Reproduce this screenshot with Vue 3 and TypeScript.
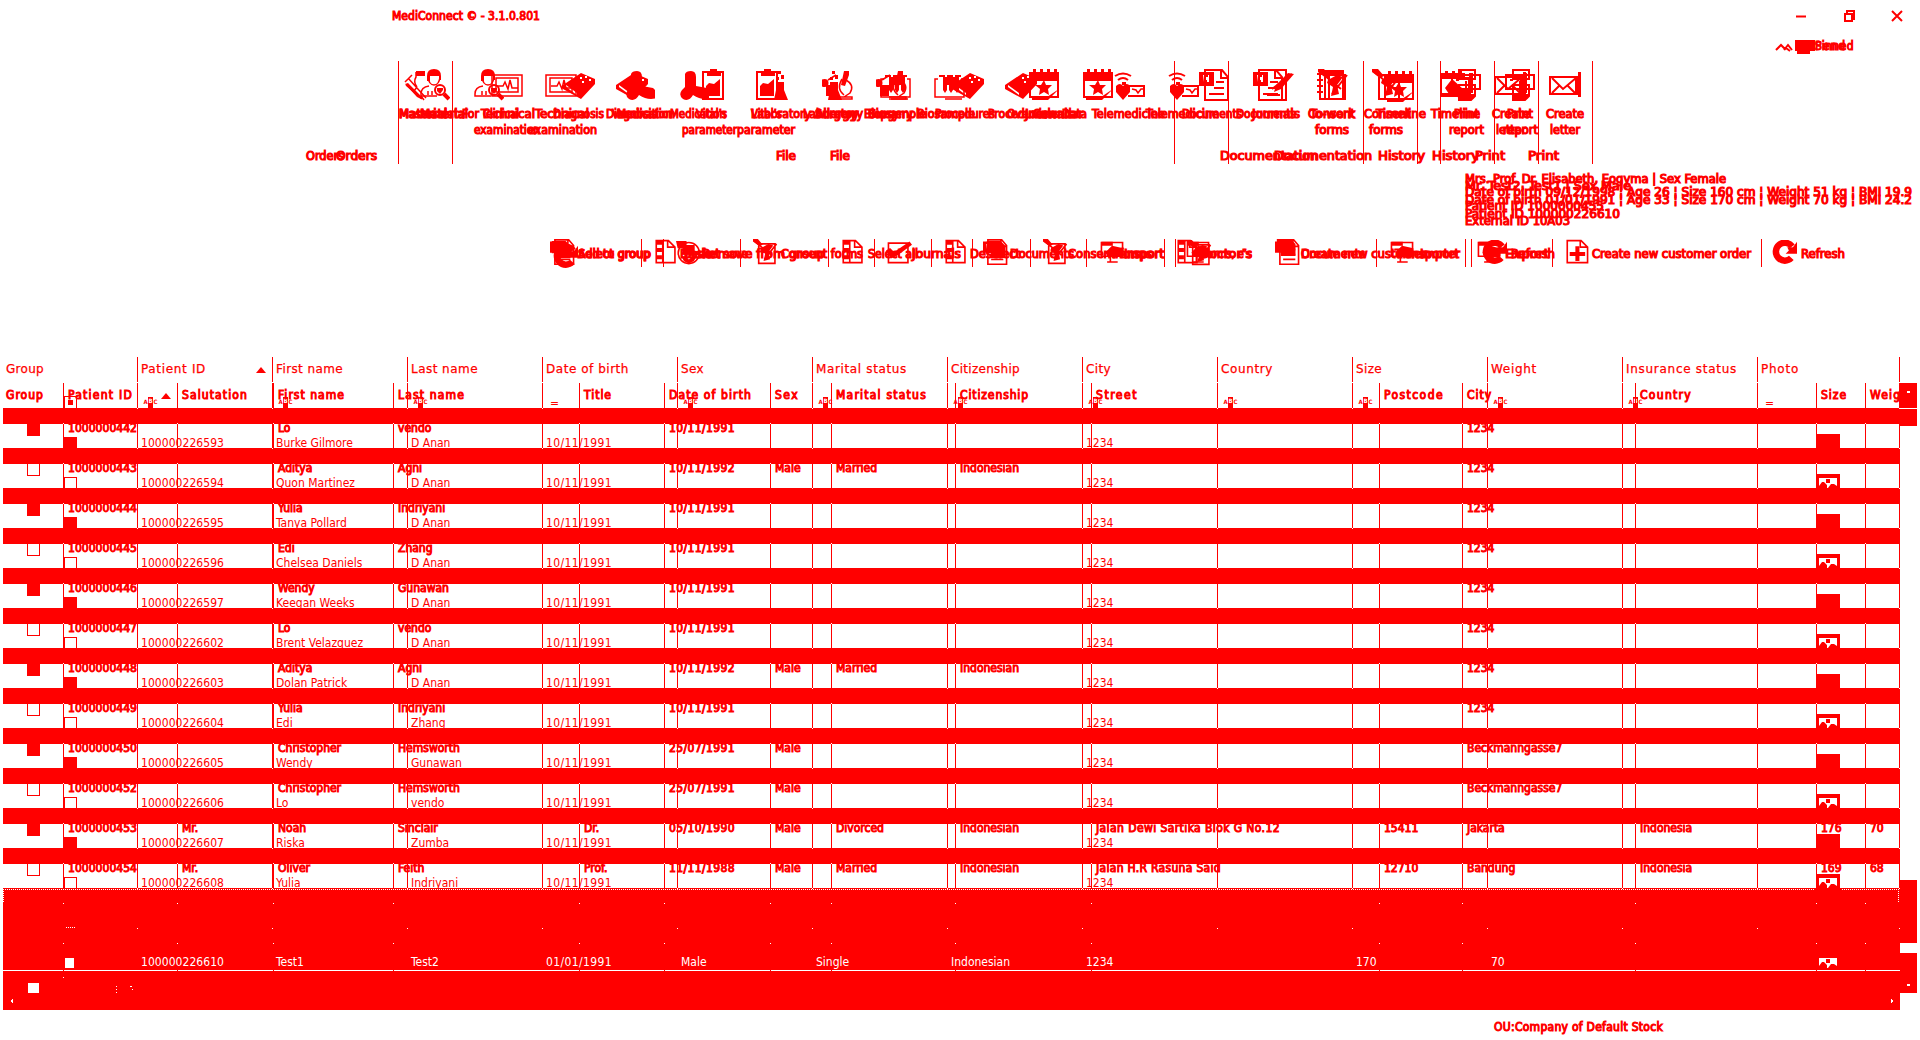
<script setup lang="ts">
type Label = [text: string, x: number, y: number, width: number]
type Glyph = [id: string, x: number, y: number]

interface Row {
  id: string
  cells: Record<number, string>
  first: string
  last: string
  under: string
}

const fit = (el: HTMLElement, binding: { value: number }) => {
  if (!binding.value || !el.textContent) return
  const natural = el.getBoundingClientRect().width
  el.style.letterSpacing = (binding.value - natural) / el.textContent.length + 'px'
}
const vFit = { mounted: fit }

const wideLines = [137, 272, 407, 542, 677, 812, 947, 1082, 1217, 1352, 1487, 1622, 1757, 1899]
const denseLines = [63, 177, 273, 393, 579, 664, 770, 831, 955, 1091, 1379, 1462, 1635, 1816, 1865]

const wideHeads: [string, number][] = [
  ['Group', 38], ['Patient ID', 65], ['First name', 67], ['Last name', 67], ['Date of birth', 83], ['Sex', 23],
  ['Marital status', 91], ['Citizenship', 69], ['City', 25], ['Country', 52], ['Size', 26], ['Weight', 46],
  ['Insurance status', 111], ['Photo', 38],
]
const denseHeads: [string, number][] = [
  ['Group', 38], ['Patient ID', 65], ['Salutation', 66], ['First name', 67], ['Last name', 67], ['Title', 28],
  ['Date of birth', 83], ['Sex', 24], ['Marital status', 91], ['Citizenship', 69], ['Street', 42], ['Postcode', 60],
  ['City', 25], ['Country', 52], ['Size', 26], ['Weight', 45],
]

const rows: Row[] = [
  { id: '1000000442', cells: { 3: 'Lo', 4: 'vendo', 6: '10/11/1991', 12: '1234' }, under: '100000226593', first: 'Burke Gilmore', last: 'D Anan' },
  { id: '1000000443', cells: { 3: 'Aditya', 4: 'Agni', 6: '10/11/1992', 7: 'Male', 8: 'Married', 9: 'Indonesian', 12: '1234' }, under: '100000226594', first: 'Quon Martinez', last: 'D Anan' },
  { id: '1000000444', cells: { 3: 'Yulia', 4: 'Indriyani', 6: '10/11/1991', 12: '1234' }, under: '100000226595', first: 'Tanya Pollard', last: 'D Anan' },
  { id: '1000000445', cells: { 3: 'Edi', 4: 'Zhang', 6: '10/11/1991', 12: '1234' }, under: '100000226596', first: 'Chelsea Daniels', last: 'D Anan' },
  { id: '1000000446', cells: { 3: 'Wendy', 4: 'Gunawan', 6: '10/11/1991', 12: '1234' }, under: '100000226597', first: 'Keegan Weeks', last: 'D Anan' },
  { id: '1000000447', cells: { 3: 'Lo', 4: 'vendo', 6: '10/11/1991', 12: '1234' }, under: '100000226602', first: 'Brent Velazquez', last: 'D Anan' },
  { id: '1000000448', cells: { 3: 'Aditya', 4: 'Agni', 6: '10/11/1992', 7: 'Male', 8: 'Married', 9: 'Indonesian', 12: '1234' }, under: '100000226603', first: 'Dolan Patrick', last: 'D Anan' },
  { id: '1000000449', cells: { 3: 'Yulia', 4: 'Indriyani', 6: '10/11/1991', 12: '1234' }, under: '100000226604', first: 'Edi', last: 'Zhang' },
  { id: '1000000450', cells: { 3: 'Christopher', 4: 'Hemsworth', 6: '25/07/1991', 7: 'Male', 12: 'Beckmanngasse7' }, under: '100000226605', first: 'Wendy', last: 'Gunawan' },
  { id: '1000000452', cells: { 3: 'Christopher', 4: 'Hemsworth', 6: '25/07/1991', 7: 'Male', 12: 'Beckmanngasse7' }, under: '100000226606', first: 'Lo', last: 'vendo' },
  { id: '1000000453', cells: { 2: 'Mr.', 3: 'Noah', 4: 'Sinclair', 5: 'Dr.', 6: '05/10/1990', 7: 'Male', 8: 'Divorced', 9: 'Indonesian', 10: 'Jalan Dewi Sartika Blok G No.12', 11: '15411', 12: 'Jakarta', 13: 'Indonesia', 14: '176', 15: '70' }, under: '100000226607', first: 'Riska', last: 'Zumba' },
  { id: '1000000454', cells: { 2: 'Mr.', 3: 'Oliver', 4: 'Feith', 5: 'Prof.', 6: '11/11/1988', 7: 'Male', 8: 'Married', 9: 'Indonesian', 10: 'Jalan H.R Rasuna Said', 11: '12710', 12: 'Bandung', 13: 'Indonesia', 14: '169', 15: '68' }, under: '100000226608', first: 'Yulia', last: 'Indriyani' },
]
const denseCell = (r: Row, i: number) => (i === 1 ? r.id : r.cells[i] ?? '')
const denseWidth = (r: Row, i: number) => (i === 1 ? 69 : i === 6 ? 66 : i === 10 && r.cells[10] ? Math.round(r.cells[10].length * 5.95) : 0)
const wideCell = (r: Row, i: number) => ({ 1: r.under, 2: r.first, 3: r.last, 4: '10/11/1991', 8: '1234' } as Record<number, string>)[i] ?? ''
const selected = ['', '100000226610', 'Test1', 'Test2', '01/01/1991', 'Male', 'Single', 'Indonesian', '1234', '', '170', '70', '', '']

const ribbonLines = [398, 452, 1174, 1228, 1363, 1417, 1440, 1494, 1538, 1592]
const ribbonLabels: Label[] = [
  ['Material', 399, 118, 48], ['Master data', 399, 118, 66], ['Material', 420, 118, 48], ['For', 462, 118, 17],
  ['Clinical', 483, 118, 36], ['Technical', 481, 118, 54], ['Technical', 535, 118, 54],
  ['Diagnosis', 553, 118, 51], ['Diagnosis', 606, 118, 51], ['Vaccination', 612, 118, 60], ['Medication', 617, 118, 58],
  ['Medication', 670, 118, 56], ['Vital’s', 696, 118, 31],
  ['Vital’s', 751, 118, 31], ['Laboratory', 751, 118, 60], ['Laboratory', 803, 118, 60], ['Allergy', 815, 118, 42],
  ['Biopsy', 864, 118, 35], ['Surgery', 815, 118, 44], ['Surgery', 869, 118, 44], ['Biosample', 917, 118, 58],
  ['Biosample', 868, 118, 58], ['Procedures', 935, 118, 60], ['Procedures', 988, 118, 60], ['Overview', 1007, 118, 50],
  ['Journals', 1025, 118, 49], ['Calendar', 1033, 118, 50], ['Data', 1062, 118, 25], ['Telemedicine', 1092, 118, 73],
  ['Telemedicine', 1146, 118, 73], ['Documents', 1182, 118, 60], ['Documents', 1236, 118, 60], ['Journals', 1252, 118, 48],
  ['Consent', 1308, 118, 47], ['To-work', 1310, 118, 45], ['Consent', 1364, 118, 47], ['Timeline', 1376, 118, 50],
  ['Timeline', 1431, 118, 49], ['Print', 1454, 118, 25], ['Create', 1492, 118, 38], ['Print', 1507, 118, 26], ['Create', 1546, 118, 38],
  ['examination', 474, 134, 66], ['examination', 528, 134, 69], ['parameter', 682, 134, 55], ['parameter', 737, 134, 58],
  ['forms', 1315, 134, 34], ['forms', 1369, 134, 34], ['report', 1449, 134, 35], ['letter', 1496, 134, 30],
  ['report', 1503, 134, 35], ['letter', 1550, 134, 30],
  ['Orders', 306, 160, 38], ['Orders', 336, 160, 41], ['File', 776, 160, 20], ['File', 830, 160, 20],
  ['Documentation', 1220, 160, 98], ['Documentation', 1274, 160, 98], ['History', 1378, 160, 47], ['History', 1432, 160, 47],
  ['Print', 1475, 160, 30], ['Print', 1528, 160, 31],
]
const patientLabels: Label[] = [
  ['Mrs. Prof. Dr. Elisabeth, Eogyma | Sex Female', 1465, 183, 261],
  ['Mr. Test2, Test1 | Sex Male', 1465, 190, 166],
  ['Date of birth 09/12/1998 ¦ Age 26 ¦ Size 160 cm ¦ Weight 51 kg ¦ BMI 19.9', 1465, 196, 447],
  ['Date of birth 01/01/1991 ¦ Age 33 ¦ Size 170 cm ¦ Weight 70 kg ¦ BMI 24.2', 1465, 204, 447],
  ['Patient ID 1000000455', 1465, 210, 139],
  ['Patient ID 100000226610', 1465, 218, 155],
  ['External ID 10A03', 1465, 225, 105],
]
const ribbonIcons: Glyph[] = [
  ['syringe', 403, 69], ['exam', 418, 69], ['exam', 472, 69], ['screen', 491, 69], ['screen', 545, 69], ['book', 563, 69], ['book', 616, 69],
  ['pills', 623, 69], ['pills', 677, 69], ['clip', 701, 69], ['clip', 755, 69], ['flask', 766, 69], ['flask', 820, 69],
  ['scope', 822, 69], ['scope', 876, 69], ['tubes', 880, 69], ['tubes', 934, 69], ['book', 952, 69], ['book', 1005, 69],
  ['calendar', 1028, 69], ['calendar', 1082, 69], ['tele', 1114, 69], ['tele', 1168, 69], ['word', 1199, 69], ['word', 1253, 69],
  ['pendoc', 1262, 69], ['notes', 1316, 69], ['pencross', 1318, 69], ['pencross', 1372, 69], ['calendar', 1383, 71],
  ['chart', 1439, 71], ['printer', 1450, 69], ['letter', 1494, 69], ['printer', 1504, 69], ['letter', 1549, 69],
]

const toolLines = [641, 663, 740, 828, 874, 931, 972, 1030, 1086, 1164, 1175, 1376, 1465, 1471, 1552, 1761]
const toolLabels: Label[] = [
  ['Select group', 578, 258, 73], ['Add to group', 578, 258, 72], ['Basket', 680, 258, 40], ['Basket save', 684, 258, 64],
  ['Remove from group', 702, 258, 123], ['Consent forms', 781, 258, 82], ['Select all', 868, 258, 50], ['Journals', 912, 258, 49],
  ['Deselect', 970, 258, 50], ['Documents', 1010, 258, 64], ['Consent forms', 1068, 258, 84], ['Transport', 1110, 258, 54],
  ['Import', 1124, 258, 40], ['Doctor’s', 1200, 258, 52], ['Forms, e’s', 1202, 258, 50], ['Documents', 1301, 258, 64],
  ['Create new customer', 1301, 258, 125], ['Transporter', 1395, 258, 65], ['Import', 1420, 258, 39], ['Export', 1505, 258, 44],
  ['Refresh', 1511, 258, 44], ['Create new customer order', 1592, 258, 159], ['Refresh', 1801, 258, 44],
]
const toolIcons: Glyph[] = [
  ['word', 550, 239], ['save', 551, 241], ['reload', 552, 244], ['listdoc', 653, 239], ['ring', 675, 240], ['wordmark', 676, 241], ['pencross', 753, 239], ['listdoc', 840, 239],
  ['pencheck', 886, 239], ['listdoc', 943, 239], ['word', 983, 239], ['save', 986, 241], ['pencross', 1043, 239], ['display', 1099, 240],
  ['listdoc', 1175, 239], ['pencross', 1187, 240], ['display', 1185, 240], ['word', 1275, 239], ['save', 1276, 239], ['display', 1389, 240],
  ['display', 1476, 240], ['reload', 1481, 240], ['plusdoc', 1564, 239], ['reload', 1771, 240],
]

const filterKind = (i: number) => (i === 0 ? 'box' : i === 4 || i === 13 ? 'eq' : 'abc')
const steps = Array.from({ length: 14 }, (_, k) => 40 * k)
</script>

<template>
  <div class="app">
    <svg class="defs" width="0" height="0">
      <defs>
        <symbol id="syringe" viewBox="0 0 32 32"><path class="o" d="M2 13l7-7M5 9l18 20M3 16l16 14M18 27l3 4M13 3v5q-3 5 1 10M14 18l-3 4" /><path class="f" d="M2 15l3-1 13 13v3l-4-2zM13 2h9v5h-9z" /></symbol>
        <symbol id="exam" viewBox="0 0 32 32"><path class="f" d="M9 7q0-7 7-7t7 7v4h-2V7h-9v5H9z" /><path class="o" d="M10 8q1 8 6 8t6-8M11 17q-8 1-8 8v2h16M10 22v4M14 22v4" /><circle class="o thick" cx="22" cy="21" r="5" /><path class="o fat" d="M26 25l5 5" /><path class="f" d="M19 19h6v2l-3 4-3-3z" /></symbol>
        <symbol id="screen" viewBox="0 0 32 32"><path class="o" d="M1 6h30v21H1zM5 9h22v14H5zM6 17h6l2-4 3 7 2-9 2 8h6" /></symbol>
        <symbol id="book" viewBox="0 0 32 32"><path class="f" fill-rule="evenodd" d="M0 16L18 4l14 6v5L18 30 0 20zM3 18l11 8v-2L3 16zM17 8h2v2h-2zM22 7h2v2h-2zM26 10h2v2h-2zM19 12h2v2h-2z" /></symbol>
        <symbol id="pills" viewBox="0 0 32 32"><path class="f" d="M8 5q1-3 6-3t5 6v9l11 2q6 5 4 10-9 3-18-3-4 7-10 4-5-4-1-9l3-3z" /></symbol>
        <symbol id="clip" viewBox="0 0 32 32"><path class="o thick" d="M2 3h20v27H2z" /><path class="f" d="M6 2h3V0h7v2h4v5H6zM5 17l3-3 5 1 6-5v17H5z" /></symbol>
        <symbol id="flask" viewBox="0 0 32 32"><path class="f" d="M10 13h8v8l4 10H8l2-10zM12 2h3v3h-3zM15 6h3v4h-3zM10 8h3v3h-3z" /></symbol>
        <symbol id="scope" viewBox="0 0 32 32"><circle class="f" cx="2.500" cy="14" r="4" /><path class="f" d="M22 2h5v4l-4 11-4-1zM4 16h9v11H4z" /><path class="o" d="M24 11q9 5 4 13l-6 4M13 30h17v-2H13M20 10q-6 10 2 16M6 11l8-5" /></symbol>
        <symbol id="tubes" viewBox="0 0 32 32"><path class="f" d="M5 6h6v2h2V6h6v2h2V6h6v2h-2v13l-2 3-2-3v-5h-2v5l-2 3-2-3v-5h-2v5l-2 3-2-3V8H5z" /><path class="o" d="M4 10H1v18h29V10h-3M11 30h17" /></symbol>
        <symbol id="calendar" viewBox="0 0 32 32"><path class="o thick" d="M2 8h28v20H2z" /><path class="f" d="M1 3h4V0h3v3h4V0h3v3h4V0h3v3h4V0h3v3h2v9H1zM16 11l2 5h6l-4 4 1 6-5-3-5 3 1-6-5-4h6zM31 20l-11 11H4v-3h15z" /></symbol>
        <symbol id="tele" viewBox="0 0 32 32"><path class="o thick" d="M1 7q8-5 16 0M4 11q5-4 10 0M14 17h16v10H14" /><path class="f" d="M2 17q4-4 7 0 4-4 7 0v6l-7 8-7-8zM8 13h4v3H8z" /><path class="o" d="M18 20l4 1 2 3 3-4h2" /></symbol>
        <symbol id="word" viewBox="0 0 32 32"><path class="o thick" d="M6 1h17l6 7v23H6zM22 1v8h7M17 13h8M15 19h10M10 25h15" /><path class="f" fill-rule="evenodd" d="M0 3h15v14H0zM4 6l1 7h2v-2h1v2h2V6H9v2H6V6z" /></symbol>
        <symbol id="wordmark" viewBox="0 0 32 32"><path class="f" d="M0 0h13v5h10v12H8V9H2z" /></symbol>
        <symbol id="pendoc" viewBox="0 0 32 32"><path class="o thick" d="M2 1h22v30H2M10 20L30 5M5 26h13" /><path class="f" d="M26 4l6 1-13 15-7 3 2-7z" /></symbol>
        <symbol id="notes" viewBox="0 0 32 32"><path class="o thick" d="M4 2h23v28H4zM1 5h6M1 11h6M1 17h6M1 23h6M13 7v22" /><path class="f" d="M5 1h23v5H5z" /></symbol>
        <symbol id="pencross" viewBox="0 0 32 32"><path class="o thick" d="M7 8v22h20V6H8M1 2l22 18M29 6L14 25" /><path class="f" d="M10 11l9-5 6 2-6 8 2 9-8 2 2-9-6-4zM0 0h6l6 7-4 2-8-6z" /></symbol>
        <symbol id="pencheck" viewBox="0 0 32 32"><path class="o thick" d="M3 5h24v24H3z" /><path class="f" d="M0 14l5-3 5 5L29 3l3 4-19 14-7 3z" /></symbol>
        <symbol id="chart" viewBox="0 0 32 32"><path class="o thick" d="M2 7h28v16H2z" /><path class="f" d="M2 2h4V0h3v2h4V0h3v2h4V0h3v2h3v6H2zM6 17l7-9 10 9 11 1-1 6-5 4-10-2H2v-3h8z" /></symbol>
        <symbol id="printer" viewBox="0 0 32 32"><path class="o thick" d="M9 1h16v9H9zM2 6h28v14H2zM9 16h16v11l-4 4H9zM6 11h3M16 12v14" /><path class="f" d="M19 4h4v20h-4zM10 25h14v4l-5 3H10z" /></symbol>
        <symbol id="letter" viewBox="0 0 32 32"><path class="o thick" d="M1 8h27v17H1zM3 9l11 11L27 9M3 24l8-8M26 24l-8-8" /><path class="f" d="M26 7h3V3h3v25h-3v-3h-3z" /></symbol>
        <symbol id="listdoc" viewBox="0 0 32 32"><path class="o thick" d="M4 2h15l8 8v19H4zM12 2v27M18 2v8h9" /><path class="f" d="M4 2h8v5H4zM4 11h7v5H4zM4 20h7v5H4z" /></symbol>
        <symbol id="plusdoc" viewBox="0 0 32 32"><path class="o thick" d="M4 2h17l8 8v19H4zM20 2v8h9" /><path class="f" d="M14 9h5v7h7v5h-7v6h-5v-6H7v-5h7z" /></symbol>
        <symbol id="reload" viewBox="0 0 32 32"><path class="r" d="M26 8A11 11 0 1 0 25 22" /><path class="f" d="M32 2v15H18l4-4-2-4h7z" /></symbol>
        <symbol id="ring" viewBox="0 0 32 32"><circle class="o thick" cx="17" cy="16" r="13" /><path class="f" d="M8 20h5l4 4 5-4h5l-4 6-6 3-6-3z" /></symbol>
        <symbol id="save" viewBox="0 0 32 32"><path class="f" d="M1 0h17l6 6v15H6v-6H1z" /></symbol>
        <symbol id="display" viewBox="0 0 32 32"><path class="o thick" d="M3 3h26v17H3zM10 27h13M14 20v7" /><path class="f" d="M3 2h14v5H3zM8 15l8-8 14 3v10H10z" /></symbol>
        <symbol id="photo" viewBox="0 0 24 14"><path class="f" d="M0 0h24v14H0z" /><path d="M3 4h18v10H3z" fill="#fff" /><path class="f" d="M10 5h4v4h-4zM3 14v-2l3-4h2l3 3v3zM12 14l3-4h3l3 2v2z" /></symbol>
      </defs>
    </svg>

    <header class="titlebar">
      <span class="caption strong" v-fit="148">MediConnect © - 3.1.0.801</span>
      <svg class="window-buttons" width="108" height="14" viewBox="0 0 108 14">
        <path d="M0 7.500h10" class="o thick" /><path d="M49 5h7v7h-7zM51 4V2h7v8h-2" class="o thick" /><path d="M96 2l10 10M106 2L96 12" class="o thick" />
      </svg>
    </header>
    <div class="quick">
      <svg width="40" height="16" viewBox="0 0 40 16">
        <path class="o thick" d="M1 11l5-5 4 4 1-1 4 3M9 11l4-5 4 5" /><path class="f" d="M20 1h20v11h-5v3H22v-3h-2z" />
      </svg>
      <span class="quick-stack strong"><span v-fit="31">Send</span><span v-fit="39">Pinned</span></span>
    </div>

    <svg class="ribbon" width="1920" height="178" viewBox="0 56 1920 178">
      <path v-for="x in ribbonLines" :key="x" class="line" :d="`M${x}.5 61v103`" />
      <use v-for="(g, i) in ribbonIcons" :key="i" :href="'#' + g[0]" :x="g[1]" :y="g[2]" width="32" height="32" />
      <text v-for="(l, i) in ribbonLabels" :key="'r' + i" :x="l[1]" :y="l[2]" :textLength="l[3]" lengthAdjust="spacingAndGlyphs">{{ l[0] }}</text>
      <text v-for="(l, i) in patientLabels" :key="'p' + i" :x="l[1]" :y="l[2]" :textLength="l[3]" lengthAdjust="spacingAndGlyphs">{{ l[0] }}</text>
    </svg>

    <svg class="toolbar" width="1920" height="123" viewBox="0 234 1920 123">
      <path v-for="x in toolLines" :key="x" class="line" :d="`M${x}.5 239v28`" />
      <use v-for="(g, i) in toolIcons" :key="i" :href="'#' + g[0]" :x="g[1]" :y="g[2]" width="26" height="26" />
      <text v-for="(l, i) in toolLabels" :key="i" :x="l[1]" :y="l[2]" :textLength="l[3]" lengthAdjust="spacingAndGlyphs">{{ l[0] }}</text>
    </svg>

    <main class="content">
      <section class="table">
        <div class="wide-grid head">
          <div v-for="h in wideHeads" :key="h[0]" class="cell">
            <span v-fit="h[1]">{{ h[0] }}</span><i v-if="h[0] === 'Patient ID'" class="sort" />
          </div>
        </div>
        <div class="stack filter">
          <div class="wide-grid">
            <div v-for="(h, i) in wideHeads" :key="h[0]" class="cell filter-cell" :class="filterKind(i)">
              <i v-if="i === 0" class="filter-box" />
              <template v-else-if="filterKind(i) === 'eq'">=</template>
              <template v-else><b>A</b><b class="solid">B</b><b>C</b></template>
            </div>
          </div>
          <div class="dense-grid strong heads">
            <div v-for="h in denseHeads" :key="h[0]" class="cell">
              <span v-fit="h[1]">{{ h[0] }}</span><i v-if="h[0] === 'Patient ID'" class="sort" />
            </div>
          </div>
        </div>
        <div class="band" />
        <template v-for="(r, n) in rows" :key="r.id">
          <div class="stack slot">
            <div class="wide-grid lower">
              <div v-for="(h, i) in wideHeads" :key="h[0]" class="cell">
                <i v-if="i === 0" class="low-check" :class="{ on: n % 2 === 0 }" />
                <span v-else-if="wideCell(r, i)" v-fit="i === 1 ? 83 : i === 4 ? 66 : 0">{{ wideCell(r, i) }}</span>
                <svg v-if="i === 13" class="thumb" width="24" height="14"><rect v-if="n % 2 === 0" class="f" width="24" height="14" /><use v-else href="#photo" width="24" height="14" /></svg>
              </div>
            </div>
            <div class="dense-grid upper strong">
              <div v-for="(h, i) in denseHeads" :key="h[0]" class="cell">
                <i v-if="i === 0" class="high-check" :class="{ on: n % 2 === 0 }" />
                <span v-else-if="denseCell(r, i)" v-fit="denseWidth(r, i)">{{ denseCell(r, i) }}</span>
              </div>
            </div>
          </div>
          <div v-if="n < rows.length - 1" class="band" />
        </template>
        <div class="selection">
          <div class="wide-grid">
            <div v-for="(c, i) in selected" :key="i" class="cell"><i v-if="i === 0" class="white-check" /><span v-fit="i === 1 ? 83 : i === 4 ? 66 : 0">{{ c }}</span>
              <svg v-if="i === 13" class="white-thumb" width="18" height="10"><path d="M0 0h18v10H0z" fill="#fff" /><path class="f" d="M7 1h4v4H7zM0 10V8l3-4h2l3 3v3zM9 10l3-4h3l3 2v2z" /></svg>
            </div>
          </div>
        </div>
      </section>
      <aside class="scroll">
        <div class="scroll-up"><i /></div>
        <div class="scroll-thumb" />
        <div class="scroll-down"><i /></div>
      </aside>
      <svg class="marks" width="1900" height="653" viewBox="0 357 1900 653" shape-rendering="crispEdges">
        <template v-for="s in steps" :key="s">
          <rect v-for="x in denseLines" :key="'d' + x" :x="x" :y="423 + s" width="1" height="1" />
          <rect v-for="x in wideLines" :key="'w' + x" :x="x" :y="408 + s" width="1" height="1" />
        </template>
        <path d="M3 889.500H1815M1842 889.500H1899M3.500 889v14M1898.500 889v14M66 927.500h9" fill="none" stroke="#fff" stroke-dasharray="1 1" />
        <path d="M3 970.500H1900" fill="none" stroke="#fff" />
        <rect v-for="x in denseLines" :key="x" class="f" :x="x" y="970" width="1" height="1" />
        <path d="M28 983h11v10H28zM116 986h1v1h-1zM116 989h1v1h-1zM116 992h1v1h-1zM130 986h2v1h-2zM132 989h1v1h-1zM63 977h1v1h-1zM10 1001l3-2v4zM1891 999l2 2-2 2z" />
      </svg>
    </main>
    <footer class="status strong"><span v-fit="169">OU:Company of Default Stock</span></footer>
  </div>
</template>

<style>
body { background: #fff; }
</style>

<style scoped>
.app { width: 1920px; height: 1040px; overflow: hidden; position: relative; background: #fff; color: #f00; font: 12px/15px "DejaVu Sans Condensed", "DejaVu Sans", sans-serif; font-stretch: condensed; }
.defs { position: absolute; }
svg { display: block; }
.o { fill: none; stroke: #f00; stroke-width: 1.5; }
.thick { stroke-width: 2; }
.fat { stroke-width: 4; }
.f { fill: #f00; }
.r { fill: none; stroke: #f00; stroke-width: 8; }
.line { stroke: #f00; stroke-width: 1; }
text { fill: #f00; stroke: #f00; stroke-width: 1.1; font-size: 12px; }
.strong { -webkit-text-stroke: 1px #f00; }
.titlebar { height: 34px; display: flex; align-items: center; justify-content: space-between; padding: 0 16px 2px 392px; box-sizing: border-box; }
.quick { height: 22px; display: flex; align-items: center; padding: 3px 0 0 1775px; box-sizing: border-box; }
.quick-stack { display: grid; }
.quick-stack span { grid-area: 1 / 1; justify-self: start; }
.content { display: flex; height: 653px; position: relative; }
.table { width: 1897px; margin-left: 3px; flex: none; }
.wide-grid { display: grid; grid-template-columns: 134px repeat(12, 135px) 143px; }
.dense-grid { display: grid; grid-template-columns: 60px 114px 96px 120px 186px 85px 106px 61px 124px 136px 288px 83px 173px 181px 49px 35px; }
.cell { box-sizing: border-box; min-width: 0; border-left: 1px solid #f00; padding-left: 4px; white-space: nowrap; display: flex; align-items: center; }
.cell:first-child { border-left-color: transparent; }
.wide-grid .cell { padding-left: 3px; }
.wide-grid .cell:last-child { border-right: 1px solid #f00; }
.head { height: 25px; margin-bottom: 1px; font: 12px/15px "DejaVu Sans", sans-serif; -webkit-text-stroke: .25px #f00; }
.head .cell:first-child, .heads .cell:first-child { padding-left: 2px; }
.sort { margin-left: auto; margin-right: 6px; border: 5px solid transparent; border-top: 0; border-bottom: 6px solid #f00; }
.stack { display: grid; overflow: hidden; }
.stack > * { grid-area: 1 / 1; }
.filter { height: 25px; }
.filter .strong { height: 25px; }
.wide-grid .filter-cell { align-items: flex-end; padding-left: 5px; font-size: 6px; line-height: 8px; padding-bottom: 2px; }
.wide-grid .filter-cell.eq { font-size: 12px; padding-left: 7px; padding-bottom: 1px; }
.filter-cell b { width: 5px; text-align: center; }
.filter-cell .solid { background: #f00; color: #fff; height: 11px; margin-bottom: -2px; }
.wide-grid .filter-cell.box { padding: 0 0 0 60px; }
.filter-box { width: 13px; height: 12px; box-sizing: border-box; border: 1px solid #f00; border-bottom: 0; background: #f00; box-shadow: inset 0 0 0 3px #fff; }
.band { height: 16px; background: #f00; }
.slot { height: 24px; }
.lower .cell { height: 24px; align-items: flex-start; padding-top: 12px; }
.lower .cell:first-child { padding: 13px 0 0 60px; }
.low-check, .high-check { display: block; box-sizing: border-box; width: 13px; height: 13px; border: 1px solid #f00; }
.on { background: #f00; }
.thumb { margin: -2px 0 0 55px; flex: none; }
.upper .cell { height: 24px; align-items: flex-start; margin-top: 0; }
.upper .cell span { margin-top: -3px; }
.high-check { margin: -1px 0 0 19px; }
.selection { background: #f00; color: #fff; height: 122px; overflow: hidden; }
.selection .wide-grid { padding-top: 67px; }
.white-check { width: 9px; height: 10px; margin-left: 58px; background: #fff; }
.white-thumb { margin-left: 58px; }
.scroll { width: 17px; display: flex; flex-direction: column; padding-top: 26px; }
.scroll i { display: block; margin: 0 auto; width: 3px; height: 2px; background: #fff; }
.scroll-up { height: 43px; background: linear-gradient(#f00 25px, #fff 25px, #fff 26px, #f00 26px); padding-top: 8px; box-sizing: border-box; }
.scroll-thumb { height: 63px; margin-top: 454px; background: #f00; }
.scroll-down { height: 40px; margin-top: 10px; padding-top: 31px; box-sizing: border-box; background: #f00; }
.marks { position: absolute; left: 0; top: 0; fill: #fff; }
.status { height: 30px; padding: 10px 0 0 1494px; box-sizing: border-box; }
</style>
